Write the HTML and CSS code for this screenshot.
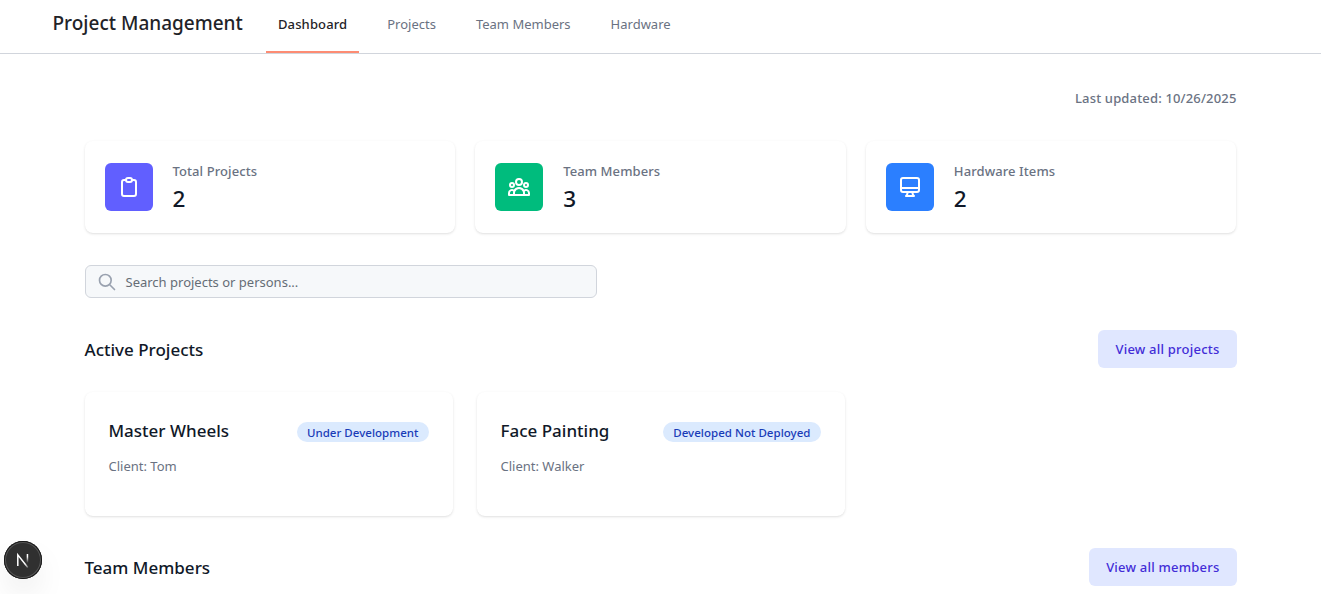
FILE: index.html
```html
<!DOCTYPE html>
<html lang="en">
<head>
<meta charset="utf-8">
<title>Project Management</title>
<link rel="stylesheet" href="styles.css">
</head>
<body>
<header class="topbar">
  <div class="brand">Project Management</div>
  <nav class="nav">
    <a class="nav-link active">Dashboard</a>
    <a class="nav-link">Projects</a>
    <a class="nav-link">Team Members</a>
    <a class="nav-link">Hardware</a>
  </nav>
</header>
<main class="page">
  <p class="updated">Last updated: 10/26/2025</p>
  <section class="stats">
    <div class="card stat">
      <div class="stat-icon indigo">
        <svg width="24" height="24" viewBox="0 0 24 24"><path d="M9 5H7a2 2 0 00-2 2v12a2 2 0 002 2h10a2 2 0 002-2V7a2 2 0 00-2-2h-2M9 5a2 2 0 002 2h2a2 2 0 002-2M9 5a2 2 0 012-2h2a2 2 0 012 2"/></svg>
      </div>
      <div><p class="stat-label">Total Projects</p><p class="stat-value">2</p></div>
    </div>
    <div class="card stat">
      <div class="stat-icon green">
        <svg width="24" height="24" viewBox="0 0 24 24"><path d="M17 20h5v-2a3 3 0 00-5.356-1.857M17 20H7m10 0v-2c0-.656-.126-1.283-.356-1.857M7 20H2v-2a3 3 0 015.356-1.857M7 20v-2c0-.656.126-1.283.356-1.857m0 0a5.002 5.002 0 019.288 0M15 7a3 3 0 11-6 0 3 3 0 016 0zm6 3a2 2 0 11-4 0 2 2 0 014 0zM7 10a2 2 0 11-4 0 2 2 0 014 0z"/></svg>
      </div>
      <div><p class="stat-label">Team Members</p><p class="stat-value">3</p></div>
    </div>
    <div class="card stat">
      <div class="stat-icon blue">
        <svg width="24" height="24" viewBox="0 0 24 24"><path d="M9.75 17L9 20l-1 1h8l-1-1-.75-3M3 13h18M5 17h14a2 2 0 002-2V5a2 2 0 00-2-2H5a2 2 0 00-2 2v10a2 2 0 002 2z"/></svg>
      </div>
      <div><p class="stat-label">Hardware Items</p><p class="stat-value">2</p></div>
    </div>
  </section>
  <div class="search">
    <svg width="20" height="20" viewBox="0 0 24 24"><path d="M21 21l-6-6m2-5a7 7 0 11-14 0 7 7 0 0114 0z"/></svg>
    <span>Search projects or persons...</span>
  </div>
  <section>
    <div class="section-head">
      <h2>Active Projects</h2>
      <a class="button">View all projects</a>
    </div>
    <div class="projects">
      <article class="card project">
        <div class="project-head"><h3>Master Wheels</h3><span class="badge">Under Development</span></div>
        <p class="client">Client: Tom</p>
      </article>
      <article class="card project">
        <div class="project-head"><h3>Face Painting</h3><span class="badge">Developed Not Deployed</span></div>
        <p class="client">Client: Walker</p>
      </article>
    </div>
  </section>
  <section>
    <div class="section-head">
      <h2>Team Members</h2>
      <a class="button">View all members</a>
    </div>
  </section>
</main>
<div class="dev-badge">
  <svg width="38" height="38" viewBox="0 0 38 38">
    <defs>
      <linearGradient id="diag" x1="16" y1="15" x2="26" y2="27" gradientUnits="userSpaceOnUse"><stop offset=".6" stop-color="#fff"/><stop offset="1" stop-color="#fff" stop-opacity="0"/></linearGradient>
      <linearGradient id="stem" x1="0" y1="13" x2="0" y2="22" gradientUnits="userSpaceOnUse"><stop offset=".3" stop-color="#fff"/><stop offset="1" stop-color="#fff" stop-opacity="0"/></linearGradient>
    </defs>
    <path d="M13.8 25V13.8L23.8 26.5" fill="none" stroke="url(#diag)" stroke-width="1.5"/>
    <rect x="22.7" y="13" width="1.5" height="10" fill="url(#stem)"/>
  </svg>
</div>
</body>
</html>
```
FILE: styles.css
```css
* { box-sizing: border-box; margin: 0; padding: 0; }
body {
  height: 594px;
  overflow: hidden;
  background: #fff;
  color: #101828;
  font-family: "Noto Sans", "Open Sans", sans-serif;
  font-size: 13px;
  line-height: 20px;
}
.topbar {
  display: flex;
  height: 54px;
  padding-left: 52.5px;
  border-bottom: 1px solid #d1d5dc;
}
.brand {
  width: 213.5px;
  padding-top: 9px;
  font-size: 19px;
  line-height: 28px;
  font-weight: 500;
  color: #1f2328;
  white-space: nowrap;
}
.nav { display: flex; gap: 16px; }
.nav-link {
  height: 53px;
  padding: 14px 12px 0;
  border-bottom: 2px solid transparent;
  color: #6a7282;
  white-space: nowrap;
}
.nav-link.active { border-color: #fd8c73; font-weight: 500; letter-spacing: .12px; color: #1f2328; }
.page { width: 1152px; margin: 34px auto 0; }
.updated { text-align: right; font-weight: 500; letter-spacing: .16px; color: #6a7282; }
.card {
  background: #fff;
  border-radius: 8px;
  box-shadow: 0 1px 3px rgba(0, 0, 0, .1), 0 1px 2px -1px rgba(0, 0, 0, .1);
}
.stats { display: grid; grid-template-columns: repeat(3, 1fr); gap: 20px; margin-top: 33px; }
.stat { display: flex; align-items: center; gap: 20px; height: 92px; padding: 0 20px; }
.stat-icon {
  display: flex;
  align-items: center;
  justify-content: center;
  width: 48px;
  height: 48px;
  border-radius: 6px;
}
.stat-icon svg { fill: none; stroke: #fff; stroke-width: 2; stroke-linecap: round; stroke-linejoin: round; }
.indigo { background: #615fff; }
.green { background: #00bc7d; }
.blue { background: #2b7fff; }
.stat-label { font-weight: 500; letter-spacing: .09px; color: #6a7282; }
.stat-value { margin-bottom: -2px; padding-top: 2px; font-size: 22.5px; line-height: 32px; font-weight: 500; }
.search {
  display: flex;
  align-items: center;
  gap: 9px;
  width: 512px;
  height: 33px;
  margin-top: 32px;
  padding-left: 11px;
  border: 1px solid #d1d5dc;
  border-radius: 6px;
  background: #f6f8fa;
  color: #656d76;
}
.search svg { fill: none; stroke: #99a1af; stroke-width: 2; stroke-linecap: round; stroke-linejoin: round; }
.section-head { display: flex; align-items: center; justify-content: space-between; height: 38px; margin-top: 32px; }
h2, h3 { font-size: 17px; line-height: 28px; font-weight: 500; }
h2 { padding-top: 1px; }
h3 { margin-top: -3px; }
.button {
  padding: 9px 17px;
  border-radius: 6px;
  background: #e0e7ff;
  font-weight: 500;
  letter-spacing: .22px;
  color: #432dd7;
}
.projects { display: grid; grid-template-columns: repeat(3, 1fr); gap: 24px; margin-top: 24px; }
.project { height: 124px; padding: 24px; }
.project-head { display: flex; align-items: center; justify-content: space-between; height: 32px; }
.badge {
  height: 20px;
  padding: 1px 10px 0;
  border-radius: 10px;
  background: #dbeafe;
  font-size: 11.5px;
  font-weight: 500;
  letter-spacing: .03px;
  color: #193cb8;
}
.client { margin-top: 8px; color: #6a7282; }
.dev-badge {
  position: absolute;
  left: 4px;
  top: 541px;
  width: 38px;
  height: 38px;
  border-radius: 50%;
  background: #303030;
  box-shadow: inset 0 0 0 1px #171717, inset 0 0 0 2px #555, 0 16px 32px -8px rgba(0, 0, 0, .18);
}
.dev-badge svg { display: block; }
```
